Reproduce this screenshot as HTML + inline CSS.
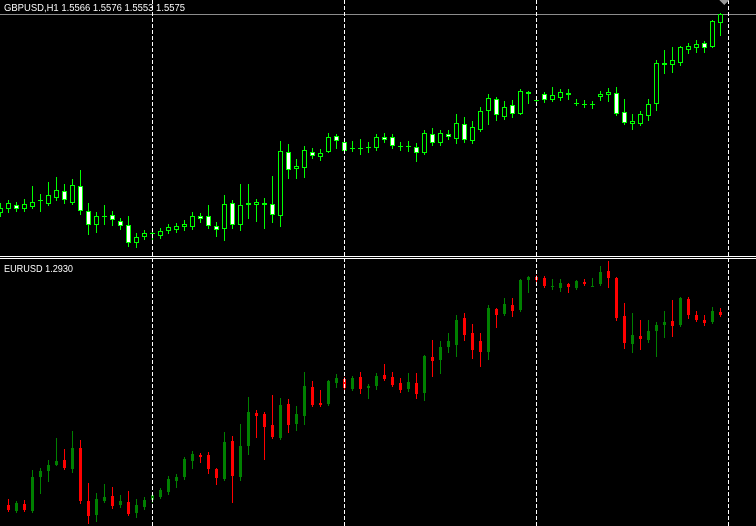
<!DOCTYPE html>
<html><head><meta charset="utf-8"><style>
html,body{margin:0;padding:0;background:#000;width:756px;height:526px;overflow:hidden}
svg{display:block}
text{font-family:"Liberation Sans","DejaVu Sans",sans-serif;font-size:10px;fill:#fff}
</style></head><body>
<svg id="s" width="756" height="526" viewBox="0 0 756 526" xmlns="http://www.w3.org/2000/svg" shape-rendering="crispEdges">
<rect width="756" height="526" fill="#000"/>
<line x1="0" y1="14.5" x2="756" y2="14.5" stroke="#8c8c8c"/>
<line x1="0" y1="256.5" x2="756" y2="256.5" stroke="#fff"/>
<line x1="0" y1="258.5" x2="756" y2="258.5" stroke="#fff"/>
<g id="c"></g>
<g stroke="#fff" stroke-dasharray="4,2">
<line x1="152.5" y1="0" x2="152.5" y2="526"/>
<line x1="344.5" y1="0" x2="344.5" y2="526"/>
<line x1="536.5" y1="0" x2="536.5" y2="526"/>
<line x1="728.5" y1="0" x2="728.5" y2="526"/>
</g>
<polygon points="719,0 729,0 724,5" fill="#9a9a9a"/>
<text x="4" y="11" textLength="181" lengthAdjust="spacingAndGlyphs">GBPUSD,H1  1.5566 1.5576 1.5553 1.5575</text>
<text x="4" y="272" textLength="69" lengthAdjust="spacingAndGlyphs">EURUSD 1.2930</text>
</svg>
<script>
var U=[[208,212,203,216,0],[203,208,200,212,0],[205,208,202,211,1],[204,208,199,211,0],[202,206,186,208,0],[200,200,194,211,0],[195,203,182,205,0],[190,197,177,200,0],[191,199,184,203,1],[185,202,179,204,0],[186,210,170,214,1],[211,224,203,234,1],[216,224,212,232,0],[216,216,205,224,0],[215,219,211,225,1],[221,225,218,229,1],[225,242,216,246,1],[237,242,233,247,0],[233,236,230,239,0],[233,233,228,239,0],[231,235,228,238,0],[227,230,224,233,0],[226,229,223,232,0],[224,226,220,230,0],[216,226,212,229,0],[216,218,213,222,1],[216,225,205,228,1],[226,229,222,236,1],[204,228,195,240,0],[203,224,200,228,1],[205,224,184,230,0],[203,204,184,218,1],[202,204,199,221,0],[203,204,198,228,1],[204,214,176,222,1],[151,215,141,226,0],[152,169,144,178,1],[166,168,159,178,0],[150,167,146,177,0],[152,155,148,158,1],[153,156,149,160,0],[137,151,133,152,0],[136,140,134,148,1],[142,150,140,152,1],[148,148,141,151,0],[148,148,139,154,0],[147,147,142,152,0],[137,147,134,150,0],[137,139,133,142,1],[137,145,134,148,1],[146,146,142,150,0],[146,146,141,151,0],[147,152,143,161,1],[133,152,130,154,0],[134,142,128,145,1],[133,142,130,145,0],[134,136,130,139,1],[123,138,114,143,0],[124,139,117,142,1],[127,140,121,143,0],[111,129,107,131,0],[98,110,94,124,0],[99,114,97,120,1],[107,116,101,119,0],[105,113,100,117,1],[91,113,89,114,0],[92,93,91,103,1],[100,100,97,105,0],[94,99,92,102,1],[95,99,87,101,0],[92,97,89,100,0],[93,94,89,99,0],[103,103,99,105,0],[104,104,100,107,0],[104,104,101,108,0],[94,96,91,100,0],[92,94,88,101,0],[93,113,87,115,1],[112,122,99,124,1],[121,123,114,129,0],[114,123,111,125,0],[104,115,99,120,0],[63,103,60,110,0],[63,64,50,73,0],[60,64,47,72,0],[47,62,46,65,0],[46,49,43,53,0],[44,47,40,52,0],[43,47,41,52,1],[21,46,20,47,0],[14,22,13,35,0]];
var L=[[505,510,499,511,1],[503,511,501,512,0],[504,510,500,511,1],[477,511,470,512,0],[471,477,468,493,0],[465,471,460,481,0],[461,465,438,465,0],[460,468,449,469,1],[448,469,431,472,0],[448,501,440,503,1],[501,516,483,523,1],[499,515,493,521,0],[497,501,484,502,0],[496,506,487,508,1],[501,505,495,507,0],[502,514,491,515,1],[505,513,499,517,0],[500,507,497,509,0],[495,500,492,502,0],[490,497,488,498,0],[479,492,476,494,0],[477,481,474,487,0],[459,477,457,479,0],[454,461,451,468,0],[455,457,453,462,1],[455,469,452,473,1],[469,478,468,484,1],[442,479,432,480,0],[441,476,436,502,1],[446,477,424,480,0],[412,446,397,454,0],[413,416,410,437,1],[414,427,412,459,1],[425,437,395,438,1],[405,438,398,439,0],[404,425,399,432,1],[414,424,406,430,0],[386,416,372,424,0],[387,405,381,406,1],[403,405,390,406,1],[381,404,380,405,0],[378,383,374,387,0],[379,388,377,389,1],[378,389,376,390,0],[377,389,372,393,1],[386,388,384,398,0],[376,386,373,389,0],[375,379,364,380,1],[377,385,372,386,1],[383,390,378,392,1],[382,389,373,391,0],[383,394,373,398,1],[356,393,355,400,0],[357,361,340,376,1],[347,360,341,373,0],[341,347,333,352,0],[320,345,315,356,0],[318,335,313,340,1],[333,350,324,358,1],[341,352,333,366,1],[308,352,305,359,0],[309,315,308,327,1],[304,314,298,315,0],[305,311,298,316,1],[280,310,279,311,0],[277,280,276,292,0],[277,280,275,282,1],[278,286,276,287,1],[286,286,279,289,0],[283,288,279,291,0],[284,287,283,292,1],[281,288,280,289,0],[282,284,279,285,1],[286,286,278,286,0],[272,284,266,285,0],[271,278,261,287,1],[278,318,277,320,1],[316,343,303,348,1],[335,344,313,352,0],[336,339,320,349,1],[331,340,320,342,0],[325,331,322,356,0],[322,325,311,337,0],[321,326,300,336,1],[298,325,297,326,0],[299,315,297,318,1],[315,320,311,321,1],[320,323,315,325,1],[311,322,307,323,0],[312,315,308,316,1]];
var h='';
U.forEach(function(d,i){var x=8*i;var G='#00ff00';
h+='<line x1="'+(x+.5)+'" y1="'+d[2]+'" x2="'+(x+.5)+'" y2="'+(d[3]+1)+'" stroke="'+G+'"/>';
if(d[1]-d[0]<1){h+='<rect x="'+(x-2)+'" y="'+d[0]+'" width="5" height="1" fill="'+G+'"/>';}
else h+='<rect x="'+(x-1.5)+'" y="'+(d[0]+.5)+'" width="4" height="'+(d[1]-d[0])+'" fill="'+(d[4]?'#fff':'#000')+'" stroke="'+G+'"/>';});
L.forEach(function(d,i){var x=8*(i+1);var C=d[4]?'#ff0000':'#008000';
h+='<line x1="'+(x+.5)+'" y1="'+d[2]+'" x2="'+(x+.5)+'" y2="'+(d[3]+1)+'" stroke="'+C+'"/>';
h+='<rect x="'+(x-1)+'" y="'+d[0]+'" width="3" height="'+Math.max(1,d[1]-d[0])+'" fill="'+C+'"/>';});
document.getElementById('c').innerHTML=h;
</script>
</body></html>
